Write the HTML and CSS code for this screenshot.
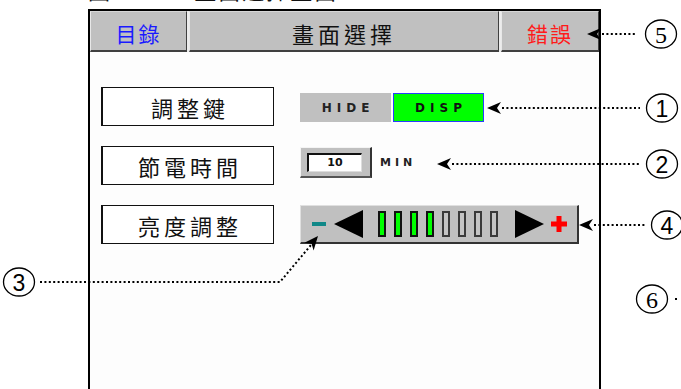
FILE: index.html
```html
<!DOCTYPE html>
<html lang="zh-Hant">
<head>
  <meta charset="utf-8">
  <title>畫面選擇畫面</title>
  <link rel="stylesheet" href="styles.css">
</head>
<body>
<div class="page">
  <div class="caption">圖 2-4.1: 畫面選擇畫面</div>

  <div class="screen">
    <div class="tabs">
      <div class="tab tab-menu">目錄</div>
      <div class="tab tab-title">畫面選擇</div>
      <div class="tab tab-error">錯誤</div>
    </div>

    <div class="settings">
      <div class="label">調整鍵</div>
      <div class="toggle">
        <span class="toggle-btn">HIDE</span>
        <span class="toggle-btn on">DISP</span>
      </div>

      <div class="label">節電時間</div>
      <div class="timer">
        <div class="num-box"><span class="num">10</span></div>
        <span class="unit">MIN</span>
      </div>

      <div class="label">亮度調整</div>
      <div class="slider">
        <span class="minus"></span>
        <span class="tri-left"></span>
        <div class="bars">
          <span class="bar on"></span>
          <span class="bar on"></span>
          <span class="bar on"></span>
          <span class="bar on"></span>
          <span class="bar"></span>
          <span class="bar"></span>
          <span class="bar"></span>
          <span class="bar"></span>
        </div>
        <span class="tri-right"></span>
        <svg class="plus" width="16" height="16" viewBox="0 0 16 16">
          <path d="M5.5 0h5v5.5H16v5h-5.5V16h-5v-5.5H0v-5h5.5z" fill="#ff0000"/>
        </svg>
      </div>
    </div>
  </div>

  <!-- callout arrows and numbers drawn over the screen -->
  <svg class="callouts" width="681" height="389" viewBox="0 0 681 389">
    <defs>
      <path id="head" d="M0 0L14 -6L10 0L14 6Z"/>
    </defs>
    <g class="dots">
      <line x1="602" y1="34" x2="636" y2="34"/>
      <line x1="502" y1="108" x2="640" y2="108"/>
      <line x1="452" y1="164" x2="640" y2="164"/>
      <line x1="594" y1="225" x2="646" y2="225"/>
      <polyline points="40,282 280,282 311,245"/>
    </g>
    <use href="#head" transform="translate(587 34)"/>
    <use href="#head" transform="translate(487 108)"/>
    <use href="#head" transform="translate(437 164)"/>
    <use href="#head" transform="translate(579 225)"/>
    <use href="#head" transform="translate(318 236) rotate(130)"/>

    <g class="rings">
      <ellipse cx="661" cy="34" rx="15.5" ry="14"/>
      <ellipse cx="662" cy="108" rx="15.5" ry="14"/>
      <ellipse cx="662" cy="164" rx="15.5" ry="14"/>
      <ellipse cx="667" cy="225" rx="15.5" ry="14"/>
      <ellipse cx="19" cy="282" rx="15.5" ry="14"/>
      <ellipse cx="652" cy="299" rx="15.5" ry="14"/>
    </g>
    <text class="num-serif" x="661" y="35">5</text>
    <text class="num-sans" x="662" y="109">1</text>
    <text class="num-sans" x="662" y="165">2</text>
    <text class="num-sans" x="667" y="226">4</text>
    <text class="num-sans" x="19" y="283">3</text>
    <text class="num-serif" x="652" y="300">6</text>
    <rect x="675" y="298" width="2" height="2"/>
  </svg>
</div>
</body>
</html>
```

FILE: styles.css
```css
html {
    margin: 0;
    padding: 0;
}

body {
    margin: 0;
    background: #fff;
    color: #111;
    font-family: "Noto Sans CJK TC", "Noto Sans", sans-serif;
}

.page {
    position: relative;
    width: 681px;
    height: 389px;
    overflow: hidden;
}

.caption {
    margin: -22px 0 0 88px;
    height: 22px;
    font-size: 22px;
    line-height: 22px;
    letter-spacing: 2px;
    white-space: nowrap;
}

.screen {
    margin: 9px 0 0 88px;
    width: 513px;
    height: 400px;
    box-sizing: border-box;
    border: 2px solid #000;
    border-bottom: none;
    background: #fdfdfd;
}

/* header bar */
.tabs {
    display: flex;
    gap: 2px;
    height: 41px;
    background: #ececec;
}

.tab {
    display: flex;
    align-items: center;
    justify-content: center;
    box-sizing: border-box;
    padding-top: 3px;
    background: #c0c0c0;
    border-top: 1px solid #d6d6d6;
    border-left: 1px solid #e8e8e8;
    border-right: 1px solid #404040;
    border-bottom: 2px solid #404040;
    font-size: 21px;
    letter-spacing: 2px;
}

.tab-menu {
    width: 97px;
    color: #1a1aff;
}

.tab-title {
    flex: 1;
    font-size: 22px;
    letter-spacing: 4px;
}

.tab-error {
    width: 98px;
    color: #ff1a1a;
}

/* setting rows */
.settings {
    display: grid;
    grid-template-columns: 173px auto;
    grid-auto-rows: 39px;
    column-gap: 26px;
    row-gap: 20px;
    padding: 35px 0 0 11px;
}

.label {
    display: flex;
    align-items: center;
    justify-content: center;
    box-sizing: border-box;
    padding-left: 4px;
    background: #fff;
    border: 1px solid #111;
    border-left-width: 2px;
    font-size: 22px;
    letter-spacing: 4px;
}

.toggle {
    display: flex;
    gap: 2px;
    align-self: center;
    height: 29px;
    margin-top: 2px;
}

.toggle-btn {
    display: flex;
    align-items: center;
    justify-content: center;
    width: 91px;
    box-sizing: border-box;
    padding-left: 5px;
    background: #c0c0c0;
    font: bold 12px "DejaVu Sans", sans-serif;
    letter-spacing: 5px;
    color: #222;
}

.toggle-btn.on {
    background: #00ff00;
    border: 1px solid #2a3cff;
    color: #111;
}

.timer {
    display: flex;
    align-items: center;
    gap: 8px;
    align-self: start;
    margin-top: 1px;
}

.num-box {
    width: 72px;
    height: 31px;
    box-sizing: border-box;
    padding: 5px 0 0 6px;
    background: #c0c0c0;
    border-top: 1px solid #f4f4f4;
    border-left: 1px solid #f4f4f4;
    border-right: 2px solid #333;
    border-bottom: 2px solid #555;
}

.num {
    display: block;
    width: 55px;
    height: 19px;
    box-sizing: border-box;
    background: #fff;
    border-top: 2px solid #111;
    border-left: 2px solid #111;
    border-right: 1px solid #ddd;
    border-bottom: 1px solid #ddd;
    font: bold 11px/16px "DejaVu Sans", sans-serif;
    text-align: center;
}

.unit {
    font: bold 11px "DejaVu Sans", sans-serif;
    letter-spacing: 4px;
    color: #222;
}

/* brightness slider */
.slider {
    display: flex;
    align-items: center;
    width: 279px;
    box-sizing: border-box;
    padding-left: 11px;
    background: #c0c0c0;
    border-top: 1px solid #e0e0e0;
    border-left: 1px solid #e0e0e0;
    border-right: 2px solid #333;
    border-bottom: 2px solid #333;
}

.minus {
    width: 14px;
    height: 4px;
    margin-right: 8px;
    background: #108888;
}

.tri-left,
.tri-right {
    width: 0;
    height: 0;
    border-top: 14px solid transparent;
    border-bottom: 14px solid transparent;
}

.tri-left {
    border-right: 29px solid #000;
    margin-right: 15px;
}

.tri-right {
    border-left: 29px solid #000;
    margin: 0 7px 0 17px;
}

.bars {
    display: flex;
    gap: 8px;
}

.bar {
    width: 8px;
    height: 26px;
    box-sizing: border-box;
    background: #c4c4c4;
    border: 2px solid #3a3a3a;
}

.bar.on {
    background: #00ff00;
    border-color: #111;
}

/* callouts */
.callouts {
    position: absolute;
    top: 0;
    left: 0;
    pointer-events: none;
}

.dots line,
.dots polyline {
    fill: none;
    stroke: #000;
    stroke-width: 2;
    stroke-dasharray: 2 2.4;
}

.rings ellipse {
    fill: none;
    stroke: #000;
    stroke-width: 1.3;
}

.num-sans,
.num-serif {
    text-anchor: middle;
    dominant-baseline: central;
}

.num-sans {
    font: 23px "Liberation Sans", sans-serif;
}

.num-serif {
    font: 24px "Liberation Serif", serif;
}
```
